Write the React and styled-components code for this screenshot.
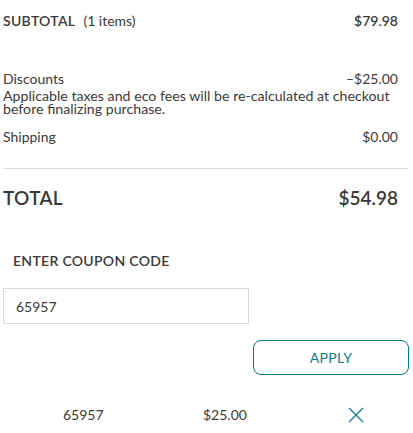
import React, { useState } from 'react';
import styled, { createGlobalStyle } from 'styled-components';

const GlobalStyle = createGlobalStyle`
  body {
    margin: 0;
    background: #fff;
    font-family: Lato, "Open Sans", sans-serif;
    color: #3a3a3a;
  }
`;

const Summary = styled.div`
  width: 406px;
  padding: 0 0 0 3px;
`;

const Row = styled.div`
  display: flex;
  justify-content: space-between;
  align-items: baseline;
  padding-right: 11px;
  font-size: ${(p) => p.size || 14}px;
  font-weight: ${(p) => p.weight || 400};
  margin-top: ${(p) => p.top || 0}px;
`;

const Label = styled.span`
  text-transform: ${(p) => (p.caps ? 'uppercase' : 'none')};
  letter-spacing: ${(p) => (p.caps ? '0.3px' : '0')};
`;

const Items = styled.span`
  font-weight: 400;
  text-transform: none;
  letter-spacing: 0;
  margin-left: 8px;
`;

const Note = styled.p`
  margin: 2px 0 0;
  font-size: 14.2px;
  line-height: 13px;
  padding-right: 11px;
`;

const Divider = styled.hr`
  border: 0;
  border-top: 1px solid #dcdcdc;
  margin: 23px 0 0;
`;

const CouponTitle = styled.h3`
  margin: 43px 0 0 10px;
  font-size: 14px;
  font-weight: 600;
  letter-spacing: 0.3px;
`;

const CouponInput = styled.input`
  display: block;
  box-sizing: border-box;
  width: 246px;
  height: 36px;
  margin-top: 19px;
  padding: 0 12px;
  border: 1px solid #d9d9d9;
  font-family: inherit;
  font-size: 14px;
  color: #3a3a3a;
  outline: none;
`;

const ApplyRow = styled.div`
  display: flex;
  justify-content: flex-end;
  margin-top: 16px;
`;

const ApplyButton = styled.button`
  box-sizing: border-box;
  width: 156px;
  height: 35px;
  border: 1.5px solid #007a8c;
  border-radius: 8px;
  background: #fff;
  color: #0d7b8d;
  font-family: inherit;
  font-size: 14px;
  letter-spacing: 0.3px;
  cursor: pointer;
`;

const AppliedRow = styled.div`
  display: grid;
  grid-template-columns: 140px 118px 1fr;
  align-items: center;
  margin-top: 31px;
  font-size: 14px;
`;

const Cell = styled.span`
  padding-left: ${(p) => p.pad || 0}px;
`;

const RemoveButton = styled.button`
  justify-self: start;
  margin-left: 87px;
  padding: 0;
  border: 0;
  background: none;
  display: flex;
  cursor: pointer;
`;

export default function App() {
  const [code, setCode] = useState('65957');

  return (
    <>
      <GlobalStyle />
      <Summary>
        <Row weight={600} top={12}>
          <Label caps>
            Subtotal<Items>(1 items)</Items>
          </Label>
          <span>$79.98</span>
        </Row>

        <Row top={41}>
          <Label>Discounts</Label>
          <span>–$25.00</span>
        </Row>
        <Note>
          Applicable taxes and eco fees will be re-calculated at checkout before finalizing purchase.
        </Note>
        <Row top={13}>
          <Label>Shipping</Label>
          <span>$0.00</span>
        </Row>

        <Divider />

        <Row size={19} weight={600} top={17}>
          <Label caps>Total</Label>
          <span>$54.98</span>
        </Row>

        <CouponTitle>ENTER COUPON CODE</CouponTitle>
        <CouponInput value={code} onChange={(e) => setCode(e.target.value)} />

        <ApplyRow>
          <ApplyButton>APPLY</ApplyButton>
        </ApplyRow>

        <AppliedRow>
          <Cell pad={60}>65957</Cell>
          <Cell pad={60}>$25.00</Cell>
          <RemoveButton aria-label="Remove coupon">
            <svg width="16" height="16" viewBox="0 0 16 16" fill="none" stroke="#0d7b8d" strokeWidth="1.3">
              <path d="M1 1 L15 15 M15 1 L1 15" />
            </svg>
          </RemoveButton>
        </AppliedRow>
      </Summary>
    </>
  );
}
